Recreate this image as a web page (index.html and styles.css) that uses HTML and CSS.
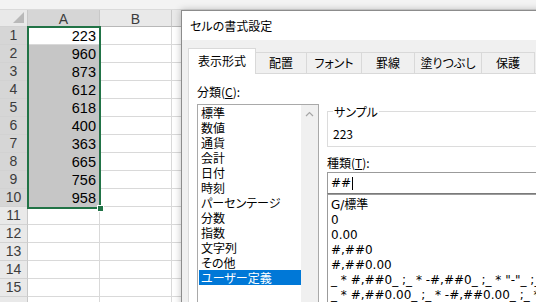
FILE: index.html
```html
<!DOCTYPE html>
<html lang="ja">
<head>
  <meta charset="UTF-8" />
  <title>セルの書式設定</title>
  <link rel="stylesheet" href="styles.css">
</head>
<body>
  <div class="sheet">
    <div class="topband"></div>
    <div class="row head">
      <div class="rh corner"><span class="tri"></span></div>
      <div class="ch sel">A</div>
      <div class="ch">B</div>
      <div class="ch"></div>
      <div class="ch"></div>
    </div>
    <div class="row"><div class="rh sel">1</div><div class="c active">223</div><div class="c"></div><div class="c"></div><div class="c"></div></div>
    <div class="row"><div class="rh sel">2</div><div class="c hl">960</div><div class="c"></div><div class="c"></div><div class="c"></div></div>
    <div class="row"><div class="rh sel">3</div><div class="c hl">873</div><div class="c"></div><div class="c"></div><div class="c"></div></div>
    <div class="row"><div class="rh sel">4</div><div class="c hl">612</div><div class="c"></div><div class="c"></div><div class="c"></div></div>
    <div class="row"><div class="rh sel">5</div><div class="c hl">618</div><div class="c"></div><div class="c"></div><div class="c"></div></div>
    <div class="row"><div class="rh sel">6</div><div class="c hl">400</div><div class="c"></div><div class="c"></div><div class="c"></div></div>
    <div class="row"><div class="rh sel">7</div><div class="c hl">363</div><div class="c"></div><div class="c"></div><div class="c"></div></div>
    <div class="row"><div class="rh sel">8</div><div class="c hl">665</div><div class="c"></div><div class="c"></div><div class="c"></div></div>
    <div class="row"><div class="rh sel">9</div><div class="c hl">756</div><div class="c"></div><div class="c"></div><div class="c"></div></div>
    <div class="row"><div class="rh sel">10</div><div class="c hl">958</div><div class="c"></div><div class="c"></div><div class="c"></div></div>
    <div class="row"><div class="rh">11</div><div class="c"></div><div class="c"></div><div class="c"></div><div class="c"></div></div>
    <div class="row"><div class="rh">12</div><div class="c"></div><div class="c"></div><div class="c"></div><div class="c"></div></div>
    <div class="row"><div class="rh">13</div><div class="c"></div><div class="c"></div><div class="c"></div><div class="c"></div></div>
    <div class="row"><div class="rh">14</div><div class="c"></div><div class="c"></div><div class="c"></div><div class="c"></div></div>
    <div class="row"><div class="rh">15</div><div class="c"></div><div class="c"></div><div class="c"></div><div class="c"></div></div>
    <div class="row"><div class="rh"></div><div class="c"></div><div class="c"></div><div class="c"></div><div class="c"></div></div>

    <!-- selected range A1:A10 -->
    <div class="selection"><span class="handle"></span></div>
  </div>

  <div class="dialog">
    <div class="titlebar">セルの書式設定</div>
    <div class="dlg-body">
      <div class="tabs">
        <div class="tab active" style="width:68px">表示形式</div>
        <div class="tab" style="width:52px">配置</div>
        <div class="tab" style="width:56px">フォント</div>
        <div class="tab" style="width:54px">罫線</div>
        <div class="tab" style="width:68px">塗りつぶし</div>
        <div class="tab" style="width:54px">保護</div>
      </div>
      <div class="panel">
        <div class="col-left">
          <div class="lbl">分類(<u>C</u>):</div>
          <div class="listbox">
            <div class="items">
              <div class="item">標準</div>
              <div class="item">数値</div>
              <div class="item">通貨</div>
              <div class="item">会計</div>
              <div class="item">日付</div>
              <div class="item">時刻</div>
              <div class="item">パーセンテージ</div>
              <div class="item">分数</div>
              <div class="item">指数</div>
              <div class="item">文字列</div>
              <div class="item">その他</div>
              <div class="item picked">ユーザー定義</div>
            </div>
            <div class="vscroll">
              <svg width="9" height="6" viewBox="0 0 9 6"><path d="M1 5 L4.5 1.5 L8 5" fill="none" stroke="#a6a6a6" stroke-width="1.2"/></svg>
            </div>
          </div>
        </div>
        <div class="col-right">
          <fieldset class="sample">
            <legend>サンプル</legend>
            <p>223</p>
          </fieldset>
          <div class="lbl kind">種類(<u>T</u>):</div>
          <div class="field">##<span class="caret"></span></div>
          <div class="fmtlist">
            <div class="item">G/標準</div>
            <div class="item">0</div>
            <div class="item">0.00</div>
            <div class="item">#,##0</div>
            <div class="item">#,##0.00</div>
            <div class="item">_ * #,##0_ ;_ * -#,##0_ ;_ * "-"_ ;_ @_ </div>
            <div class="item">_ * #,##0.00_ ;_ * -#,##0.00_ ;_ * "-"??_ ;_ @_ </div>
          </div>
        </div>
      </div>
    </div>
  </div>
</body>
</html>
```

FILE: styles.css
```css
html, body {
  margin: 0;
  overflow: hidden;
  width: 536px;
  height: 302px;
  background: #fff;
}

.sheet {
  position: relative;
  font-family: 'Liberation Sans', Arial, sans-serif;
}

.topband {
  height: 9px;
  background: #f3f3f3;
  border-bottom: 1px solid #dadada;
}

.row {
  display: flex;
  height: 18px;
}

.row.head {
  height: 17px;
}

.rh {
  width: 28px;
  flex: none;
  box-sizing: border-box;
  background: #e9e9e9;
  border-right: 1px solid #c8c8c8;
  border-bottom: 1px solid #d2d2d2;
  color: #3c3c3c;
  font-size: 14px;
  line-height: 17px;
  text-align: center;
}

.rh.sel {
  background: #d6d6d6;
}

.corner {
  position: relative;
}

.tri {
  position: absolute;
  right: 3px;
  bottom: 3px;
  width: 0;
  height: 0;
  border-left: 11px solid transparent;
  border-bottom: 11px solid #b9b9b9;
}

.ch {
  width: 72px;
  flex: none;
  box-sizing: border-box;
  background: #e9e9e9;
  border-right: 1px solid #c8c8c8;
  border-bottom: 1px solid #b8b8b8;
  color: #3c3c3c;
  font-size: 14px;
  line-height: 18px;
  text-align: center;
}

.ch.sel {
  background: #d6d6d6;
}

.c {
  width: 72px;
  flex: none;
  box-sizing: border-box;
  border-right: 1px solid #d9d9d9;
  border-bottom: 1px solid #d9d9d9;
  font-size: 14.5px;
  line-height: 18px;
  text-align: right;
  padding-right: 3px;
  color: #000;
}

.c.hl {
  background: #c6c6c6;
  border-bottom-color: #c6c6c6;
}

.c.active {
  background: #fff;
}

.selection {
  position: absolute;
  left: 27px;
  top: 26px;
  width: 74px;
  height: 183px;
  box-sizing: border-box;
  border: 2px solid #217346;
}

.handle {
  position: absolute;
  right: -5px;
  bottom: -5px;
  width: 5px;
  height: 5px;
  background: #217346;
  border: 1px solid #fff;
}

/* dialog window */
.dialog {
  position: absolute;
  left: 181px;
  top: 10px;
  width: 420px;
  height: 330px;
  border: 1px solid #8c8c8c;
  background: #f0f0f0;
  box-shadow: 0 0 7px rgba(0, 0, 0, 0.25);
  font-family: 'Noto Sans CJK JP', 'Noto Sans', sans-serif;
  font-feature-settings: "palt";
  font-size: 12px;
  color: #000;
}

.titlebar {
  height: 29px;
  line-height: 29px;
  background: #fff;
  padding-left: 8px;
}

.dlg-body {
  padding: 8px 0 0 6px;
}

.tabs {
  display: flex;
  align-items: flex-end;
  height: 25px;
  position: relative;
  z-index: 1;
}

.tab {
  box-sizing: border-box;
  height: 21px;
  line-height: 19px;
  text-align: center;
  border: 1px solid #d9d9d9;
  border-bottom: none;
  margin-left: -1px;
  background: #f0f0f0;
}

.tab.active {
  height: 26px;
  line-height: 24px;
  margin-left: 0;
  margin-bottom: -1px;
  background: #fff;
  border-color: #d9d9d9;
}

.panel {
  display: flex;
  gap: 8px;
  background: #fff;
  border: 1px solid #d9d9d9;
  height: 260px;
  padding: 10px 0 0 8px;
}

.lbl {
  line-height: 15px;
  height: 15px;
}

.col-left {
  width: 122px;
  flex: none;
}

.listbox {
  display: flex;
  margin-top: 5px;
  height: 220px;
  border: 1px solid #a9a9a9;
}

.items {
  flex: 1;
  padding-left: 1px;
}

.item {
  line-height: 15px;
  height: 15px;
  padding-left: 2px;
  white-space: nowrap;
}

.item.picked {
  background: #0078d7;
  color: #fff;
}

.vscroll {
  width: 17px;
  background: #f0f0f0;
  display: flex;
  justify-content: center;
  padding-top: 6px;
  box-sizing: border-box;
}

.col-right {
  flex: 1;
  min-width: 0;
}

.sample {
  margin: 20px 0 0 0;
  padding: 0 5px 5px;
  border: 1px solid #dcdcdc;
  border-right: none;
}

.sample legend {
  padding: 0 1px;
  line-height: 15px;
}

.sample p {
  margin: 7px 0 0;
  line-height: 15px;
}

.lbl.kind {
  margin-top: 8px;
}

.field {
  margin-top: 2px;
  height: 22px;
  box-sizing: border-box;
  border: 1px solid #9b9b9b;
  border-bottom-color: #7a7a7a;
  padding-left: 3px;
  line-height: 20px;
  display: flex;
  align-items: center;
  font-family: 'DejaVu Sans', 'Noto Sans CJK JP', sans-serif;
  font-size: 12px;
}

.caret {
  display: inline-block;
  width: 0;
  height: 13px;
  border-left: 1px solid #000;
  margin-left: 1px;
}

.fmtlist {
  border: 1px solid #9b9b9b;
  padding: 3px 0 0 3px;
  height: 120px;
  font-family: 'DejaVu Sans', 'Noto Sans CJK JP', sans-serif;
  font-size: 12px;
}

.fmtlist .item {
  padding-left: 0;
}
```
